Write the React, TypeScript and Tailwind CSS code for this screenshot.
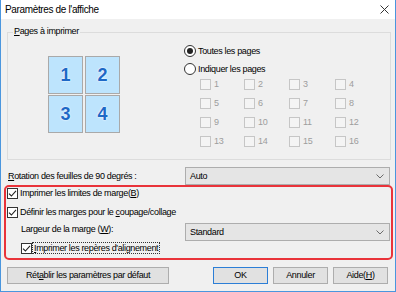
import React from 'react';

const font = "font-['Liberation_Sans',Arial,sans-serif] tracking-[-0.35px]";

function Check({ checked = false, disabled = false }: { checked?: boolean; disabled?: boolean }) {
    return (
        <span
            className={
                disabled
                    ? "w-[11px] h-[11px] shrink-0 border border-[#c6c6c6] bg-[#f4f4f4]"
                    : "w-[11px] h-[11px] shrink-0 border border-[#333333] bg-white flex items-center justify-center"
            }
        >
            {checked && (
                <svg width="9" height="9" viewBox="0 0 9 9">
                    <path d="M1 4.6 L3.4 7 L8 1.8" fill="none" stroke="#222" strokeWidth="1.1" />
                </svg>
            )}
        </span>
    );
}

function Radio({ checked = false }: { checked?: boolean }) {
    return (
        <span className="w-[12px] h-[12px] shrink-0 rounded-full border border-[#333333] bg-white flex items-center justify-center">
            {checked && <span className="w-[6px] h-[6px] rounded-full bg-[#222222]" />}
        </span>
    );
}

function Combo({ value }: { value: string }) {
    return (
        <div className="ml-auto w-[205px] h-[18px] border border-[#adadad] bg-[#e5e5e5] flex items-center pl-[4px] pr-[5px]">
            <span className="flex-1 text-[9px] leading-none text-black">{value}</span>
            <svg width="8" height="5" viewBox="0 0 8 5">
                <path d="M0.5 0.5 L4 4 L7.5 0.5" fill="none" stroke="#6b6b6b" strokeWidth="1" />
            </svg>
        </div>
    );
}

function Btn({ children, w, primary = false }: { children: React.ReactNode; w: string; primary?: boolean }) {
    return (
        <div
            className={
                (primary ? "border-[#2c7ed6] " : "border-[#adadad] ") +
                w +
                " h-[17px] border bg-[#e1e1e1] flex items-center justify-center text-[9px] leading-none text-black"
            }
        >
            {children}
        </div>
    );
}

const tiles = ['1', '2', '3', '4'];
const pageNums = Array.from({ length: 16 }, (_, i) => String(i + 1));

export default function App() {
    return (
        <div className={"w-[396px] h-[292px] flex flex-col border-x border-b border-[#4a96de] bg-[#f0f0f0] overflow-hidden " + font}>
            <div className="h-[19px] shrink-0 bg-white flex items-center pl-[4px] pr-[6px]">
                <span className="flex-1 text-[10px] leading-none text-black">Paramètres de l'affiche</span>
                <svg width="9" height="9" viewBox="0 0 9 9">
                    <path d="M0.5 0.5 L8.5 8.5 M8.5 0.5 L0.5 8.5" stroke="#333" strokeWidth="1" />
                </svg>
            </div>

            <div className="flex-1 flex flex-col">
                <div className="relative ml-[6px] mt-[13px] w-[384px] h-[128px] border border-[#dcdcdc] flex">
                    <span className="absolute left-[5px] top-[-8px] px-[1px] bg-[#f0f0f0] text-[9px] leading-[13px] text-black">
                        <span className="underline underline-offset-[1px]">P</span>ages à imprimer
                    </span>
                    <div className="w-[176px] pl-[40px] pt-[23px]">
                        <div className="grid grid-cols-[35px_35px] gap-x-[2px] gap-y-[1px]">
                            {tiles.map((t) => (
                                <div
                                    key={t}
                                    className="h-[38px] border border-[#a9a9a9] bg-[#bde4fd] flex items-center justify-center tracking-normal font-bold text-[18px] leading-none text-[#1d68c6] [text-shadow:0_0_1px_#fff,0_0_2px_#fff]"
                                >
                                    {t}
                                </div>
                            ))}
                        </div>
                    </div>
                    <div className="flex-1 pt-[9px] flex flex-col">
                        <div className="h-[18px] flex items-center gap-[2px] text-[9px] leading-none text-black">
                            <Radio checked />
                            <span>Toutes les pages</span>
                        </div>
                        <div className="h-[18px] flex items-center gap-[2px] text-[9px] leading-none text-black">
                            <Radio />
                            <span>Indiquer les pages</span>
                        </div>
                        <div className="-mt-[3px] pl-[16px] grid grid-cols-[44px_45px_46px_44px]">
                            {pageNums.map((n) => (
                                <div key={n} className="h-[19px] flex items-center gap-[3px] text-[9px] leading-none text-[#9d9d9d]">
                                    <Check disabled />
                                    <span>{n}</span>
                                </div>
                            ))}
                        </div>
                    </div>
                </div>

                <div className="mt-[7px] ml-[7px] mr-[5px] h-[18px] flex items-center">
                    <span className="text-[9px] leading-none text-black">
                        <span className="underline underline-offset-[1px]">R</span>otation des feuilles de 90 degrés :
                    </span>
                    <Combo value="Auto" />
                </div>

                <div className="ml-[3px] w-[389px] h-[75px] border-2 border-[#e9333a] rounded-[5px] flex flex-col text-[9px] leading-none text-black">
                    <div className="h-[12px] pl-[1px] flex items-center gap-[2px]">
                        <Check checked />
                        <span>
                            Imprimer les limites de marge(<span className="underline underline-offset-[1px]">B</span>)
                        </span>
                    </div>
                    <div className="mt-[7px] h-[12px] pl-[1px] flex items-center gap-[2px]">
                        <Check checked />
                        <span>
                            Définir les marges pour le <span className="underline underline-offset-[1px]">c</span>oupage/collage
                        </span>
                    </div>
                    <div className="mt-[5px] h-[18px] pl-[15px] pr-[1px] flex items-start">
                        <span className="h-[12px] flex items-center">
                            Largeur de la marge (<span className="underline underline-offset-[1px]">W</span>):
                        </span>
                        <Combo value="Standard" />
                    </div>
                    <div className="mt-[1px] h-[12px] pl-[15px] flex items-center">
                        <Check checked />
                        <span className="h-[12px] px-[1px] border border-dotted border-[#333333] flex items-center">
                            <span className="underline underline-offset-[1px]">I</span>mprimer les repères d'alignement
                        </span>
                    </div>
                </div>

                <div className="mt-[7px] pl-[6px] pr-[7px] flex items-center">
                    <Btn w="w-[162px]">
                        <span>
                            Rét<span className="underline underline-offset-[1px]">a</span>blir les paramètres par défaut
                        </span>
                    </Btn>
                    <div className="ml-auto flex gap-[5px]">
                        <Btn w="w-[55px]" primary>OK</Btn>
                        <Btn w="w-[55px]">Annuler</Btn>
                        <Btn w="w-[55px]">
                            <span>
                                Aide(<span className="underline underline-offset-[1px]">H</span>)
                            </span>
                        </Btn>
                    </div>
                </div>
            </div>
        </div>
    );
}
